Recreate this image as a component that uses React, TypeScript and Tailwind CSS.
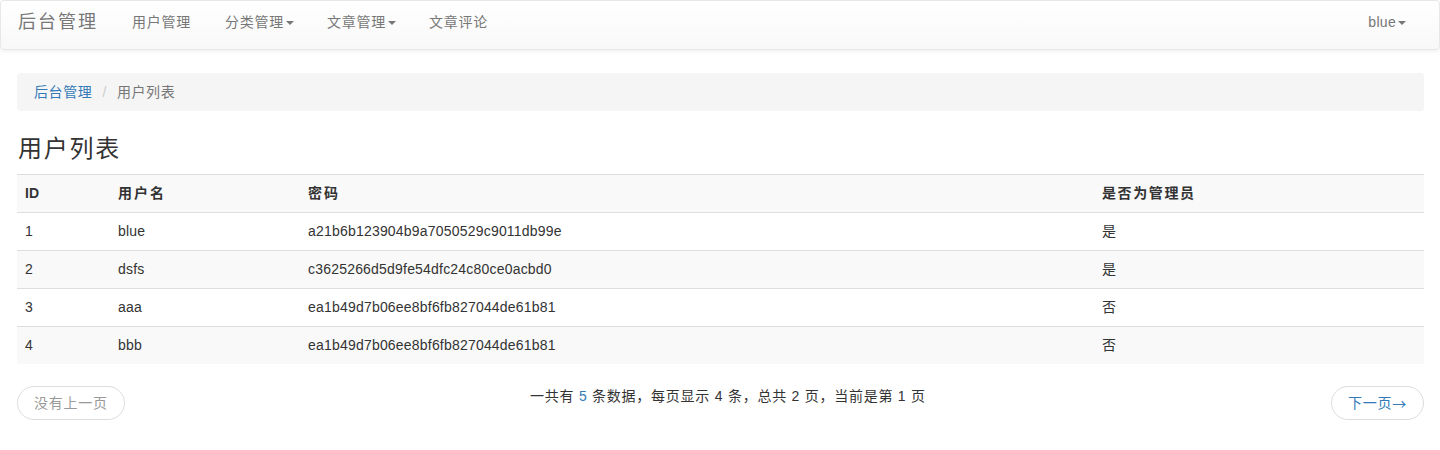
import React from 'react';

const users = [
    { id: 1, name: 'blue', pwd: 'a21b6b123904b9a7050529c9011db99e', admin: '是' },
    { id: 2, name: 'dsfs', pwd: 'c3625266d5d9fe54dfc24c80ce0acbd0', admin: '是' },
    { id: 3, name: 'aaa', pwd: 'ea1b49d7b06ee8bf6fb827044de61b81', admin: '否' },
    { id: 4, name: 'bbb', pwd: 'ea1b49d7b06ee8bf6fb827044de61b81', admin: '否' },
];

const font = { fontFamily: '"Liberation Sans", Arial, "Noto Sans CJK SC", sans-serif' };

function Caret() {
    return (
        <span className="ml-[2px] inline-block h-0 w-0 border-x-[4px] border-t-[4px] border-x-transparent border-t-[#777] align-middle" />
    );
}

export default function App() {
    return (
        <div className="min-h-[450px] bg-white text-[14px] text-[#333]" style={font}>
            {/* Navbar */}
            <div className="flex h-[50px] items-center justify-between rounded-[4px] border border-[#e7e7e7] bg-gradient-to-b from-white to-[#f8f8f8] pb-[6px] shadow-[0_1px_5px_rgba(0,0,0,0.075)]">
                <div className="flex items-center">
                    <span className="pl-[17px] pr-[19px] text-[18px] tracking-[2px] text-[#777]">后台管理</span>
                    <span className="px-[15px] tracking-[0.75px] text-[#777]">用户管理</span>
                    <span className="ml-[4px] px-[15px] tracking-[0.75px] text-[#777]">
                        分类管理<Caret />
                    </span>
                    <span className="ml-[3px] px-[15px] tracking-[0.75px] text-[#777]">
                        文章管理<Caret />
                    </span>
                    <span className="ml-[3px] px-[15px] tracking-[0.75px] text-[#777]">文章评论</span>
                </div>
                <span className="pr-[33px] tracking-[0.3px] text-[#777]">
                    blue<Caret />
                </span>
            </div>

            <div className="pl-[17px] pr-[16px]">
                {/* Breadcrumb */}
                <div className="mt-[23px] flex h-[38px] items-center rounded-[4px] bg-[#f5f5f5] px-[17px] tracking-[0.6px]">
                    <span className="text-[#337ab7]">后台管理</span>
                    <span className="px-[10px] text-[#ccc]">/</span>
                    <span className="text-[#777]">用户列表</span>
                </div>

                <h3 className="mt-[24px] mb-[11px] pl-px text-[24px] leading-[28px] font-normal tracking-[1.75px] text-[#333]">用户列表</h3>

                {/* Table */}
                <div className="w-full tracking-[0.2px]">
                    <div className="grid h-[38px] grid-cols-[93px_190px_794px_1fr] items-center border-t border-[#ddd] bg-[#f9f9f9] font-bold">
                        <span className="px-[8px]">ID</span>
                        <span className="px-[8px] tracking-[2px]">用户名</span>
                        <span className="px-[8px] tracking-[2px]">密码</span>
                        <span className="px-[8px] tracking-[1.6px]">是否为管理员</span>
                    </div>
                    {users.map((u, i) => (
                        <div
                            key={u.id}
                            className={
                                'grid h-[38px] grid-cols-[93px_190px_794px_1fr] items-center border-t border-[#ddd] ' +
                                (i % 2 === 1 ? 'bg-[#f9f9f9]' : 'bg-white')
                            }
                        >
                            <span className="px-[8px]">{u.id}</span>
                            <span className="px-[8px]">{u.name}</span>
                            <span className="px-[8px]">{u.pwd}</span>
                            <span className="px-[8px]">{u.admin}</span>
                        </div>
                    ))}
                </div>

                {/* Pager */}
                <div className="mt-[22px] flex items-start justify-between">
                    <span className="flex h-[34px] items-center rounded-full border border-[#ddd] bg-white px-[16px] tracking-[0.75px] text-[#999]">
                        没有上一页
                    </span>
                    <span className="leading-[20px] tracking-[0.75px]">
                        一共有 <span className="text-[#337ab7]">5</span> 条数据，每页显示 4 条，总共 2 页，当前是第 1 页
                    </span>
                    <span className="flex h-[34px] items-center rounded-full border border-[#ddd] bg-white px-[16px] tracking-[0.75px] text-[#337ab7]">
                        下一页<span style={{ fontFamily: '"Noto Sans CJK SC", sans-serif' }}>→</span>
                    </span>
                </div>
            </div>
        </div>
    );
}
